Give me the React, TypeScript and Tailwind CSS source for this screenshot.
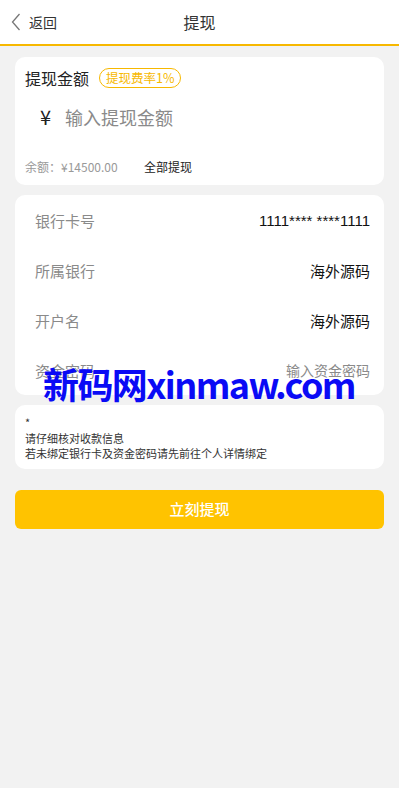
import React from "react";

export default function App() {
  const rows = [
    { label: "银行卡号", value: "1111**** ****1111", kind: "num" },
    { label: "所属银行", value: "海外源码", kind: "text" },
    { label: "开户名", value: "海外源码", kind: "text" },
    { label: "资金密码", value: "输入资金密码", kind: "ph" },
  ];
  return (
    <div
      className="relative w-[399px] h-[788px] bg-[#f2f2f2] overflow-hidden"
      style={{ fontFamily: '"Noto Sans CJK SC", "Noto Sans", sans-serif' }}
    >
      {/* header */}
      <div className="relative h-[46px] bg-white border-b-2 border-[#f7b800] flex items-center">
        <div className="flex items-center pl-[11px]">
          <svg width="10" height="18" viewBox="0 0 10 18" fill="none">
            <path d="M8.5 1 L1.5 9 L8.5 17" stroke="#777" strokeWidth="1.3" />
          </svg>
          <span className="ml-[8px] text-[14px] text-[#333] leading-none">返回</span>
        </div>
        <div className="absolute left-0 right-0 top-0 h-[44px] flex items-center justify-center text-[16px] text-[#333] pointer-events-none">
          提现
        </div>
      </div>

      <div className="px-[15px] pt-[11px] flex flex-col">
        {/* amount card */}
        <div className="bg-white rounded-[10px] h-[128px] px-[10px] pt-[10px] flex flex-col">
          <div className="flex items-center h-[22px]">
            <span className="text-[16px] text-[#222] leading-none">提现金额</span>
            <span className="ml-[10px] h-[20px] px-[6px] rounded-full border border-[#f7b800] text-[#f7b800] text-[12.5px] leading-none flex items-center">
              提现费率1%
            </span>
          </div>
          <div className="flex items-center h-[30px] mt-[13px] pl-[15px]">
            <span className="text-[20px] text-[#222] leading-none">¥</span>
            <span className="ml-[14px] text-[18px] text-[#8a8a8a] leading-none">输入提现金额</span>
          </div>
          <div className="flex items-center mt-[27px] h-[16px]">
            <span className="text-[12px] text-[#999] leading-none w-[119px]">余额：¥14500.00</span>
            <span className="text-[12px] text-[#222] leading-none">全部提现</span>
          </div>
        </div>

        {/* bank card */}
        <div className="bg-white rounded-[10px] mt-[10px] flex flex-col pl-[20px] pr-[14px]">
          {rows.map((r) => (
            <div key={r.label} className="h-[50px] flex items-center justify-between">
              <span className="text-[15px] text-[#8a8a8a] leading-none">{r.label}</span>
              {r.kind === "num" ? (
                <span
                  className="text-[15px] text-[#111] leading-none"
                  style={{ fontFamily: '"Liberation Sans", Arial, sans-serif' }}
                >
                  {r.value}
                </span>
              ) : r.kind === "ph" ? (
                <span className="text-[14px] text-[#8a8a8a] leading-none">{r.value}</span>
              ) : (
                <span className="text-[15px] text-[#111] leading-none">{r.value}</span>
              )}
            </div>
          ))}
        </div>

        {/* notice */}
        <div className="bg-white rounded-[10px] mt-[10px] h-[64px] px-[10px] pt-[10px] text-[11px] leading-[15.5px] text-[#333]">
          <div>*</div>
          <div>请仔细核对收款信息</div>
          <div>若未绑定银行卡及资金密码请先前往个人详情绑定</div>
        </div>

        {/* button */}
        <button className="mt-[21px] h-[39px] rounded-[6px] bg-[#ffc300] text-white text-[15px] font-medium flex items-center justify-center">
          立刻提现
        </button>
      </div>

      {/* watermark */}
      <div
        className="absolute left-[43px] top-[365px] text-[#0a0af5] text-[36px] font-bold leading-none tracking-[-1.6px] pointer-events-none"
        style={{ fontFamily: '"Noto Sans CJK SC", Inter, sans-serif' }}
      >
        新码网xinmaw.com
      </div>
    </div>
  );
}
